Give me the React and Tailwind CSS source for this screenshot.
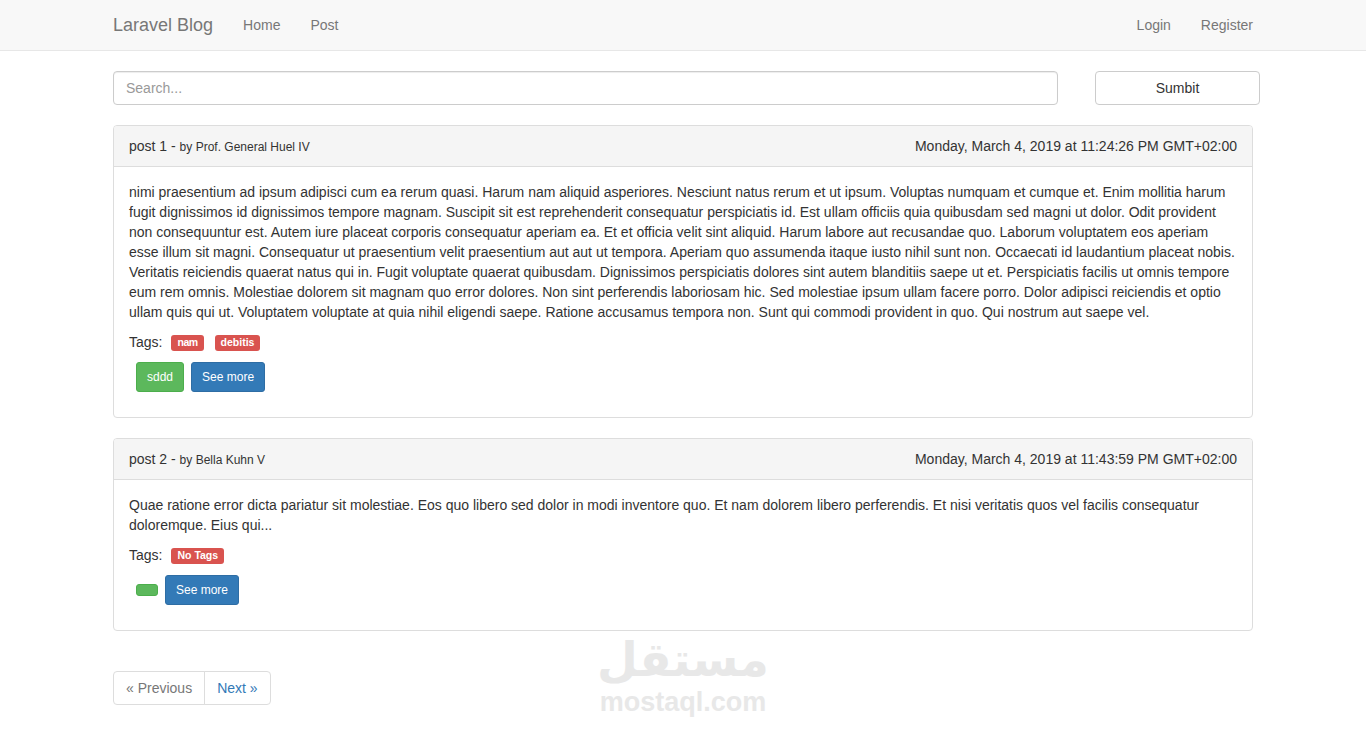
import React from 'react';

const post1Body =
  'nimi praesentium ad ipsum adipisci cum ea rerum quasi. Harum nam aliquid asperiores. Nesciunt natus rerum et ut ipsum. Voluptas numquam et cumque et. Enim mollitia harum fugit dignissimos id dignissimos tempore magnam. Suscipit sit est reprehenderit consequatur perspiciatis id. Est ullam officiis quia quibusdam sed magni ut dolor. Odit provident non consequuntur est. Autem iure placeat corporis consequatur aperiam ea. Et et officia velit sint aliquid. Harum labore aut recusandae quo. Laborum voluptatem eos aperiam esse illum sit magni. Consequatur ut praesentium velit praesentium aut aut ut tempora. Aperiam quo assumenda itaque iusto nihil sunt non. Occaecati id laudantium placeat nobis. Veritatis reiciendis quaerat natus qui in. Fugit voluptate quaerat quibusdam. Dignissimos perspiciatis dolores sint autem blanditiis saepe ut et. Perspiciatis facilis ut omnis tempore eum rem omnis. Molestiae dolorem sit magnam quo error dolores. Non sint perferendis laboriosam hic. Sed molestiae ipsum ullam facere porro. Dolor adipisci reiciendis et optio ullam quis qui ut. Voluptatem voluptate at quia nihil eligendi saepe. Ratione accusamus tempora non. Sunt qui commodi provident in quo. Qui nostrum aut saepe vel.';

const post2Body =
  'Quae ratione error dicta pariatur sit molestiae. Eos quo libero sed dolor in modi inventore quo. Et nam dolorem libero perferendis. Et nisi veritatis quos vel facilis consequatur doloremque. Eius qui...';

const posts = [
  {
    id: 1,
    author: 'Prof. General Huel IV',
    date: 'Monday, March 4, 2019 at 11:24:26 PM GMT+02:00',
    body: post1Body,
    tags: ['nam', 'debitis'],
    action: 'sddd',
  },
  {
    id: 2,
    author: 'Bella Kuhn V',
    date: 'Monday, March 4, 2019 at 11:43:59 PM GMT+02:00',
    body: post2Body,
    tags: [],
    action: '',
  },
];

function Label({ children, className = '' }) {
  return (
    <span
      className={`relative top-[1px] inline-block rounded-[3px] bg-[#d9534f] px-[6px] pt-[2px] pb-[3px] text-[10.5px] font-bold leading-[11px] text-white ${className}`}
    >
      {children}
    </span>
  );
}

function PostPanel({ post }) {
  return (
    <div className="mb-[20px] rounded-[4px] border border-[#ddd] bg-white">
      <div className="flex h-[41px] items-center justify-between rounded-t-[3px] border-b border-[#ddd] bg-[#f5f5f5] px-[15px]">
        <div className="text-[14px] leading-[20px] text-[#333]">
          post {post.id} - <span className="text-[12px] leading-none">by {post.author}</span>
        </div>
        <div className="text-[14px] leading-[20px] text-[#333]">{post.date}</div>
      </div>
      <div className="p-[15px]">
        <p className="mb-[10px] text-[14px] leading-[20px] text-[#333]">{post.body}</p>
        <div className="flex items-center text-[14px] leading-[20px] text-[#333]">
          <span>Tags:</span>
          {post.tags.length > 0 ? (
            post.tags.map((t, i) => (
              <Label key={t} className={i === 0 ? 'ml-[9px] tracking-[-0.5px]' : 'ml-[11px]'}>
                {t}
              </Label>
            ))
          ) : (
            <Label className="ml-[9px]">No Tags</Label>
          )}
        </div>
        <div className="mt-[10px] mb-[10px] flex items-center gap-[7px] pl-[7px]">
          <button className="rounded-[3px] border border-[#4cae4c] bg-[#5cb85c] px-[10px] py-[5px] text-[12px] leading-[18px] text-white">
            {post.action || <span className="block h-0" />}
          </button>
          <button className="rounded-[3px] border border-[#2e6da4] bg-[#337ab7] px-[10px] py-[5px] text-[12px] leading-[18px] text-white">
            See more
          </button>
        </div>
      </div>
    </div>
  );
}

function App() {
  return (
    <div className="relative min-h-[730px] bg-white font-['Liberation_Sans',Arial,sans-serif] text-[14px] text-[#333]">
      <nav className="h-[51px] border-b border-[#e7e7e7] bg-[#f8f8f8]">
        <div className="mx-auto flex h-[50px] w-[1170px] items-center px-[15px]">
          <span className="pr-[15px] text-[18px] leading-[20px] text-[#777]">Laravel Blog</span>
          <a className="px-[15px] text-[14px] leading-[20px] text-[#777]">Home</a>
          <a className="px-[15px] text-[14px] leading-[20px] text-[#777]">Post</a>
          <div className="ml-auto -mr-[15px] flex">
            <a className="px-[15px] text-[14px] leading-[20px] text-[#777]">Login</a>
            <a className="px-[15px] text-[14px] leading-[20px] text-[#777]">Register</a>
          </div>
        </div>
      </nav>

      <div className="mx-auto w-[1170px] px-[15px]">
        <div className="mt-[20px] mb-[20px] flex items-center justify-between -mr-[7px]">
          <input
            type="text"
            placeholder="Search..."
            className="h-[34px] w-[945px] rounded-[4px] border border-[#ccc] px-[12px] py-[6px] text-[14px] leading-[20px] text-[#555] shadow-[inset_0_1px_1px_rgba(0,0,0,0.075)] outline-none placeholder:text-[#999]"
          />
          <button className="h-[34px] w-[165px] rounded-[4px] border border-[#ccc] bg-white text-[14px] leading-[20px] text-[#333]">
            Sumbit
          </button>
        </div>

        {posts.map((p) => (
          <PostPanel key={p.id} post={p} />
        ))}

        <div className="mt-[40px] flex">
          <span className="rounded-l-[4px] border border-[#ddd] px-[12px] py-[6px] text-[14px] leading-[20px] text-[#777]">
            « Previous
          </span>
          <a className="-ml-px rounded-r-[4px] border border-[#ddd] px-[12px] py-[6px] text-[14px] leading-[20px] text-[#337ab7]">
            Next »
          </a>
        </div>
      </div>

      <div className="pointer-events-none absolute left-[600px] top-[630px] flex w-[166px] flex-col items-center text-[#e8e8e8]">
        <span className="font-['DejaVu_Sans',sans-serif] text-[47px] font-bold leading-[60px]">مستقل</span>
        <span className="font-['Liberation_Sans',Arial,sans-serif] text-[27px] font-bold leading-[24px]">mostaql.com</span>
      </div>
    </div>
  );
}

export default App;
